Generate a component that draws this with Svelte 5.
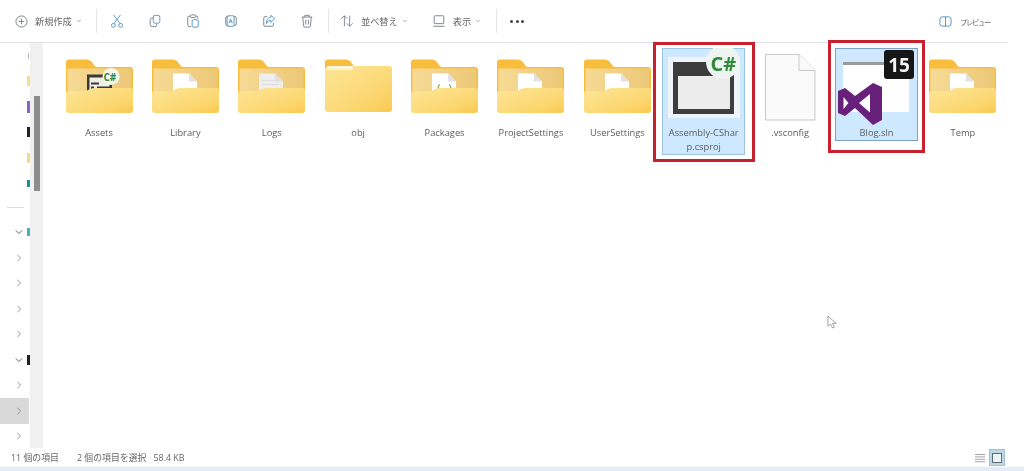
<script>
  const folders = [
    { name: 'Assets', kind: 'cs' },
    { name: 'Library', kind: 'doc' },
    { name: 'Logs', kind: 'log' },
    { name: 'obj', kind: 'empty' },
    { name: 'Packages', kind: 'pkg' },
    { name: 'ProjectSettings', kind: 'doc' },
    { name: 'UserSettings', kind: 'doc' }
  ];
  const rowsTop = ['', 'yellow', 'purple', 'black', 'yellow', 'teal'];
  const rowsBottom = [
    { open: true, sw: 'cyan' }, { open: false }, { open: false }, { open: false }, { open: false },
    { open: true, sw: 'black' }, { open: false }, { open: false, selected: true }, { open: false }
  ];
</script>

{#snippet chevron()}
  <svg class="chev" viewBox="0 0 8 8"><path d="M1.5 2.5 4 5.2l2.5-2.7" /></svg>
{/snippet}

{#snippet folder(kind)}
  <svg class="icon" viewBox="0 0 83 78">
    <defs>
      <linearGradient id="front-{kind}" x1="0" y1="0" x2="1" y2="1">
        <stop offset="0" stop-color="#fde596" />
        <stop offset="0.65" stop-color="#fcd873" />
        <stop offset="1" stop-color="#f9c94f" />
      </linearGradient>
      <linearGradient id="inner-{kind}" x1="0" y1="0" x2="1" y2="0">
        <stop offset="0" stop-color="#f6da95" />
        <stop offset="1" stop-color="#ecc878" />
      </linearGradient>
    </defs>
    <g transform="translate(8 11.5)">
      <path d="M3 0h18q3 0 5 2.500l2 3q1 2 3 2h33q3 0 3 3V34H0V3q0-3 3-3z" fill="#f8bd3c" />
      {#if kind === 'empty'}
        <path d="M0 10q0-2.500 3-2.500h24q2 0 3-1h34q3 0 3 3v40q0 3-3 3H3q-3 0-3-3z" fill="url(#front-{kind})" />
        <path d="M1.500 8.500h25l3-2h-27z" fill="#fbf6e6" />
        <path d="M2 9.500h26" stroke="#fff8e0" stroke-width="1.500" />
      {:else}
        <rect x="1.500" y="9" width="64" height="26" fill="url(#inner-{kind})" />
        {#if kind === 'cs'}
          <path d="M21 15h25v20H21z" fill="#3a3a3a" />
          <path d="M23.500 18h20v17h-20z" fill="#eef0e8" />
          <path d="M25 23h8v2h-8zM25 27h3v6h-3zM31 27h12v2H31zM41 27h3v6h-3z" fill="#3a3a3a" />
          <circle cx="45" cy="17" r="8.500" fill="#f4f6ee" />
          <text class="mini" x="37.500" y="21">C#</text>
        {:else}
          <path d="M21 14h16l8 8v14H21z" fill={kind === 'log' ? '#eeeeee' : '#ffffff'} />
          <path d="M37 14v8h8z" fill="#e2e2e2" />
          {#if kind === 'log'}
            <path d="M24 21h17M24 25h17" stroke="#dddddd" stroke-width="1" />
          {/if}
          {#if kind === 'pkg'}
            <path d="M29 25q-2 1-2 4M38 25q2 1 2 4" stroke="#7aa85a" stroke-width="1.200" fill="none" />
          {/if}
        {/if}
        <path d="M0 34q0-2.500 3-2.500h15q3 0 5-1.500 2-1.500 5-1.500h36q3 0 3 3v19q0 3-3 3H3q-3 0-3-3z" fill="url(#front-{kind})" />
      {/if}
    </g>
  </svg>
{/snippet}

<div class="page">
  <header class="toolbar">
    <button class="text-btn new">
      <svg class="tool" viewBox="0 0 14 14"><circle cx="7" cy="7" r="6" /><path class="blue" d="M7 4v6M4 7h6" /></svg>
      <span class="new-label">新規作成</span>{@render chevron()}
    </button>
    <i class="sep"></i>
    <div class="tools">
      <span class="tool-box"><svg class="tool large" viewBox="0 0 16 16"><path class="blue" d="M4 1l7.500 10M12 1 4.500 11" /><circle class="blue" cx="3.800" cy="13" r="2.200" /><circle class="blue" cx="12.200" cy="13" r="2.200" /></svg></span>
      <span class="tool-box"><svg class="tool large" viewBox="0 0 16 16"><rect class="blue" x="6" y="1.500" width="7.500" height="9" rx="2" /><path d="M6 4.500H4.500a2 2 0 0 0-2 2V12a2.500 2.500 0 0 0 2.500 2.500h3a2 2 0 0 0 2-2v-1" /></svg></span>
      <span class="tool-box"><svg class="tool large" viewBox="0 0 16 16"><path d="M5 2.500H3.500a1.500 1.500 0 0 0-1.500 1.500v9a1.500 1.500 0 0 0 1.500 1.500H6M11 2.500h1a1.500 1.500 0 0 1 1.500 1.500v1.500" /><rect x="5" y="1" width="6" height="3" rx="1" /><rect class="blue" x="7" y="6.500" width="7" height="8.500" rx="1.500" /></svg></span>
      <span class="tool-box"><svg class="tool large" viewBox="0 0 16 16"><path d="M11 3h1.500A1.500 1.500 0 0 1 14 4.500v7a1.500 1.500 0 0 1-1.500 1.500H11M5 3H3.500A1.500 1.500 0 0 0 2 4.500v7A1.500 1.500 0 0 0 3.500 13H5" /><rect class="blue" x="3.500" y="2" width="8" height="12" rx="1" /><path class="blue" d="M5.500 10.500l2-5 2 5M6.300 8.800h2.400" /></svg></span>
      <span class="tool-box"><svg class="tool large" viewBox="0 0 16 16"><path d="M6 3H3.500A1.500 1.500 0 0 0 2 4.500v8A1.500 1.500 0 0 0 3.500 14h8a1.500 1.500 0 0 0 1.500-1.500V10" /><path class="blue" d="M10 1.500 14.500 5.500 10 9.500V7.300Q6.500 7 5 11 5 4.500 10 3.700z" /></svg></span>
      <span class="tool-box"><svg class="tool large" viewBox="0 0 16 16"><path d="M2 3.500h12M5.500 3.500V1.500h5v2M3.200 3.500l.8 10a1.500 1.500 0 0 0 1.500 1.500h5a1.500 1.500 0 0 0 1.500-1.500l.8-10M6.500 6.500v5.500M9.500 6.500v5.500" /></svg></span>
    </div>
    <i class="sep after-tools"></i>
    <button class="text-btn sort">
      <svg class="tool large" viewBox="0 0 16 16"><path d="M5 14V2M1.500 5.500 5 2l3.500 3.500" /><path class="blue" d="M11 2v12M7.500 10.500 11 14l3.500-3.500" /></svg>
      <span class="sort-label">並べ替え</span>{@render chevron()}
    </button>
    <button class="text-btn view">
      <svg class="tool large" viewBox="0 0 16 16"><rect x="2.500" y="2" width="11" height="9" rx="1" /><path d="M1.500 14h13" /></svg>
      <span class="view-label">表示</span>{@render chevron()}
    </button>
    <i class="sep after-view"></i>
    <span class="dots"><i></i><i></i><i></i></span>
    <div class="preview">
      <svg class="tool" viewBox="0 0 14 14"><rect class="blue" x="1" y="2" width="12" height="10" rx="2.500" /><path class="blue" d="M7 2v10" /></svg>
      <span>プレビュー</span>
    </div>
  </header>

  <div class="middle">
    <nav class="side">
      {#each rowsTop as sw}
        <div class="row"><span class="arrow"></span>{#if sw}<i class="swatch {sw}"></i>{:else}<i class="dot"></i>{/if}</div>
      {/each}
      <div class="divider"></div>
      {#each rowsBottom as r}
        <div class="row" class:selected={r.selected}>
          <span class="arrow">
            {#if r.open}
              <svg viewBox="0 0 10 10"><path d="M1 3l4 4 4-4" /></svg>
            {:else}
              <svg viewBox="0 0 10 10"><path d="M3 1l4 4-4 4" /></svg>
            {/if}
          </span>
          {#if r.sw}<i class="swatch {r.sw}"></i>{/if}
        </div>
      {/each}
    </nav>
    <div class="track"><div class="thumb"></div></div>

    <main class="files">
      {#each folders as f}
        <div class="item">
          {@render folder(f.kind)}
          <div class="label">{f.name}</div>
        </div>
      {/each}

      <div class="item picked frame-a">
        <svg class="icon" viewBox="0 0 83 78">
          <rect x="6" y="9" width="72" height="61" fill="#eef4f9" />
          <rect x="11" y="14" width="61" height="52" fill="#3d3d3d" />
          <rect x="16" y="28" width="52" height="33" fill="#ececec" />
          <circle cx="61" cy="14" r="17" fill="#eef4f0" />
          <text class="csharp" x="48.500" y="23">C#</text>
        </svg>
        <div class="label">Assembly-CSharp.csproj</div>
      </div>

      <div class="item">
        <svg class="icon" viewBox="0 0 83 78">
          <path d="M16.500 6.500H50l16 16v49.500H16.500z" fill="#fafafa" stroke="#c9c9c9" />
          <path d="M50 6.500V22.500H66" fill="#fafafa" stroke="#c9c9c9" />
        </svg>
        <div class="label">.vsconfig</div>
      </div>

      <div class="item picked frame-b">
        <svg class="icon" viewBox="0 0 83 78">
          <rect x="8" y="14" width="66" height="50" fill="#ffffff" />
          <rect x="8" y="14" width="66" height="3" fill="#9a9a9a" />
          <rect x="49" y="2" width="30" height="29" rx="3" fill="#161616" />
          <text class="badge" x="64" y="24">15</text>
          <path fill="#68217a" fill-rule="evenodd" d="M38 35l9 4v33l-9 5-18-17-10 8-7-3v-22l7-3 10 8zM8.500 49v12l5-6zM35 46 24 55l11 9.500z" />
        </svg>
        <div class="label">Blog.sln</div>
      </div>

      <div class="item">
        {@render folder('doc')}
        <div class="label">Temp</div>
      </div>
    </main>
  </div>

  <footer class="status">
    <span class="count">11 個の項目</span>
    <span class="chosen">2 個の項目を選択</span>
    <span class="size">58.4 KB</span>
    <div class="views">
      <svg class="list-view" viewBox="0 0 10 10"><path d="M0 1.500h10M0 3.900h10M0 6.300h10M0 8.700h10" /></svg>
      <span class="tile-view"><i></i></span>
    </div>
  </footer>
  <div class="strip"></div>

  <svg class="cursor" viewBox="0 0 12 16"><path d="M1 1v11l2.800-2.400L6 14l2-1-2-4h4z" /></svg>
</div>

<style>
  :global(body) { margin: 0; background: #fff; overflow: hidden; }
  .page {
    position: relative;
    width: 1024px;
    height: 471px;
    display: flex;
    flex-direction: column;
    overflow: hidden;
    font-family: "Open Sans", "Noto Sans CJK JP", sans-serif;
    color: #5a5a5a;
    filter: blur(0.45px);
  }
  .toolbar {
    width: 992px;
    height: 42px;
    flex: none;
    padding-left: 15px;
    border-bottom: 1px solid #dfe3e6;
    display: flex;
    align-items: center;
  }
  button {
    all: unset;
    display: flex;
    align-items: center;
    font-size: 9.200px;
    color: #666;
    white-space: nowrap;
  }
  .tool { width: 13px; height: 13px; fill: none; stroke: #707a82; stroke-width: 1; flex: none; }
  .tool.large { width: 14px; height: 14px; }
  .tool .blue { stroke: #4b8fc4; fill: none; }
  .chev { width: 6px; height: 6px; fill: none; stroke: #a0a0a0; stroke-width: 1; margin-left: 4px; }
  .new { width: 81px; }
  .new-label { margin-left: 7px; }
  .sep { width: 1px; height: 24px; background: #e6e6e6; flex: none; }
  .tools { display: flex; margin-left: 1px; }
  .tool-box { width: 38px; display: flex; justify-content: center; }
  .after-tools { margin-left: 2px; }
  .sort { margin-left: 11px; }
  .sort-label { margin-left: 7px; }
  .view { margin-left: 24px; }
  .view-label { margin-left: 7px; }
  .after-view { margin-left: 15px; }
  .dots { display: flex; gap: 2.500px; margin-left: 13px; }
  .dots i { width: 3px; height: 3px; border-radius: 50%; background: #444; }
  .preview { margin-left: auto; margin-right: 17px; display: flex; align-items: center; gap: 8px; font-size: 7.400px; letter-spacing: -1.400px; color: #666; }
  .middle { flex: 1; display: flex; min-height: 0; }
  .side { width: 30px; flex: none; display: flex; flex-direction: column; }
  .row { height: 25.500px; flex: none; display: flex; align-items: center; position: relative; }
  .row.selected { background: #d9d9d9; margin-right: 1px; }
  .arrow { width: 27px; flex: none; display: flex; justify-content: center; padding-left: 11px; box-sizing: border-box; }
  .arrow svg { width: 8px; height: 8px; fill: none; stroke: #8a8a8a; stroke-width: 1.100; }
  .row:nth-child(8) .arrow svg, .row:nth-child(13) .arrow svg { stroke: #555; }
  .swatch { width: 3px; height: 10px; display: block; flex: none; }
  .dot { width: 1px; height: 6px; background: #bdbdbd; margin-left: 1px; }
  .yellow { background: #f5dc8b; }
  .purple { background: #8b62c9; height: 12px; }
  .black { background: #222; }
  .teal { background: #1d8f8d; height: 7px; }
  .cyan { background: #4aaebd; height: 8px; }
  .divider { height: 23.500px; flex: none; display: flex; align-items: center; }
  .divider::before { content: ""; display: block; margin-left: 7px; width: 17px; height: 1px; background: #dcdcdc; }
  .track { width: 13px; flex: none; background: #f0f0f0; }
  .thumb { width: 6px; height: 95px; margin: 53px 0 0 3.500px; background: #8e8e8e; }
  .files {
    flex: 1;
    padding: 5px 0 0 14.500px;
    display: flex;
    align-items: flex-start;
    gap: 3.400px;
  }
  .item {
    width: 83px;
    flex: none;
    box-sizing: border-box;
    position: relative;
    padding-bottom: 1px;
  }
  .icon { display: block; width: 83px; height: 78px; }
  .label {
    font-size: 9.300px;
    line-height: 14px;
    color: #5c5c5c;
    text-align: center;
    padding: 0 3px;
    word-break: break-all;
  }
  .picked { background: #cde8ff; box-shadow: inset 0 0 0 1px #9cc3e0; }
  .frame-b { box-shadow: inset 0 0 0 1px #7da3c0; }
  .picked::after {
    content: "";
    position: absolute;
    border: 3px solid #c9202e;
    box-sizing: border-box;
  }
  .frame-a::after { left: -9px; right: -10px; top: -6px; bottom: -7px; }
  .frame-b::after { left: -7px; right: -7px; top: -8px; bottom: -12px; }
  .mini { font: 700 10px "Open Sans", sans-serif; fill: #2f8a3c; }
  .csharp { font: 700 20px "Open Sans", sans-serif; fill: #2f8a3c; }
  .badge { font: 700 19px "Open Sans", sans-serif; fill: #f2f2f2; text-anchor: middle; }
  .status {
    height: 19px;
    flex: none;
    display: flex;
    align-items: center;
    font-size: 8.900px;
    color: #666;
    white-space: nowrap;
  }
  .count { margin-left: 11px; }
  .chosen { margin-left: 18px; }
  .size { margin-left: 7px; }
  .views { margin-left: auto; margin-right: 19px; display: flex; align-items: center; gap: 4px; }
  .list-view { width: 10px; height: 10px; fill: none; stroke: #a5a5a5; stroke-width: 1; }
  .tile-view { width: 16px; height: 17px; box-sizing: border-box; background: #bcd8e4; border: 1px solid #9fc0cf; display: flex; align-items: center; justify-content: center; }
  .tile-view i { display: block; width: 8px; height: 8px; border: 1px solid #5a6d75; background: #eef5f8; }
  .strip { height: 4px; flex: none; background: #e2ecf8; }
  .cursor {
    position: absolute;
    left: 827px;
    top: 315px;
    width: 11px;
    height: 15px;
    fill: #fff;
    stroke: #9a9a9a;
    stroke-width: 1;
  }
</style>
